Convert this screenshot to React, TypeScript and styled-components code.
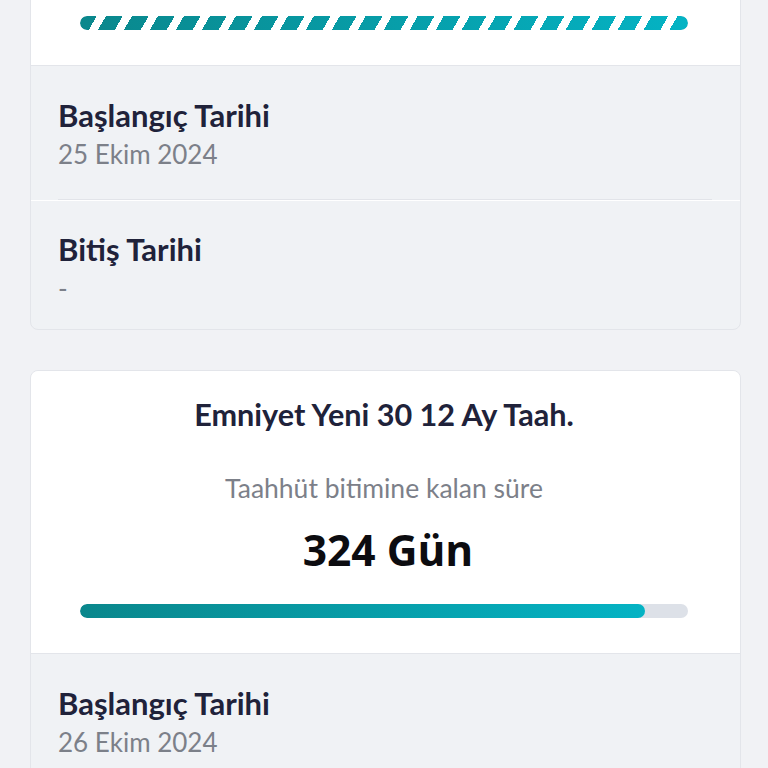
import React from 'react';
import styled, { createGlobalStyle } from 'styled-components';

const GlobalStyle = createGlobalStyle`
  html, body {
    margin: 0;
    padding: 0;
    background: #f1f2f5;
    font-family: "Lato", "Noto Sans", sans-serif;
    overflow: hidden;
  }
`;

const Page = styled.div`
  padding: 0 27px 40px 30px;
  display: flex;
  flex-direction: column;
  gap: 40px;
  margin-top: -218px;
`;

const Card = styled.div`
  background: #f0f2f5;
  border: 1px solid #e3e5ea;
  border-radius: 8px;
  overflow: hidden;
`;

const Summary = styled.div`
  background: #ffffff;
  border-bottom: 1px solid #e3e5ea;
  padding: 25px 52px 35px 49px;
  display: flex;
  flex-direction: column;
  align-items: center;
`;

const Title = styled.div`
  font-size: 30.6px;
  line-height: 38px;
  font-weight: 700;
  color: #20223a;
`;

const Caption = styled.div`
  margin-top: 38px;
  font-size: 26.5px;
  line-height: 32px;
  color: #7c8089;
`;

const Remaining = styled.div`
  margin-top: 19px;
  padding-left: 8px;
  font-family: "Open Sans", "Noto Sans", sans-serif;
  font-size: 42.5px;
  line-height: 54px;
  font-weight: 700;
  color: #0c0c10;
`;

const Track = styled.div`
  align-self: stretch;
  margin-top: 27px;
  height: 14px;
  flex-shrink: 0;
  border-radius: 7px;
  background: #dde1e8;
  overflow: hidden;
`;

const Fill = styled.div<{ $striped?: boolean }>`
  height: 100%;
  border-radius: 7px;
  background: ${p =>
    p.$striped
      ? `repeating-linear-gradient(120deg, transparent 0 14.5px, #ffffff 14.5px 22.5px),
         linear-gradient(90deg, #0a878c, #04b3c4)`
      : 'linear-gradient(90deg, #0a878c, #04b3c4)'};
`;

const Row = styled.div<{ $first?: boolean }>`
  padding: 30px 27px 27px;
  border-top: ${p => (p.$first ? 'none' : '1px solid #ffffff')};

  &:last-child {
    padding-top: 29px;
    padding-bottom: 23px;
  }
`;

const Divider = styled.div`
  height: 1px;
  margin: 0 28px 0 27px;
  background: #e2e4e9;
`;

const Label = styled.div`
  font-size: 31px;
  line-height: 38px;
  font-weight: 700;
  color: #20223a;
`;

const Value = styled.div`
  margin-top: 2px;
  font-size: 26px;
  line-height: 36px;
  color: #7c8089;
`;

type Plan = {
  title: string;
  days: number;
  progress: number;
  striped?: boolean;
  start: string;
  end: string;
};

const plans: Plan[] = [
  { title: 'Emniyet Yeni 30 12 Ay Taah.', days: 0, progress: 100, striped: true, start: '25 Ekim 2024', end: '-' },
  { title: 'Emniyet Yeni 30 12 Ay Taah.', days: 324, progress: 93, start: '26 Ekim 2024', end: '-' },
];

function PlanCard({ plan }: { plan: Plan }) {
  return (
    <Card>
      <Summary>
        <Title>{plan.title}</Title>
        <Caption>Taahhüt bitimine kalan süre</Caption>
        <Remaining>{plan.days} Gün</Remaining>
        <Track>
          <Fill $striped={plan.striped} style={{ width: `${plan.progress}%` }} />
        </Track>
      </Summary>
      <Row $first>
        <Label>Başlangıç Tarihi</Label>
        <Value>{plan.start}</Value>
      </Row>
      <Divider />
      <Row>
        <Label>Bitiş Tarihi</Label>
        <Value>{plan.end}</Value>
      </Row>
    </Card>
  );
}

export default function App() {
  return (
    <>
      <GlobalStyle />
      <Page>
        {plans.map((p, i) => (
          <PlanCard key={i} plan={p} />
        ))}
      </Page>
    </>
  );
}
